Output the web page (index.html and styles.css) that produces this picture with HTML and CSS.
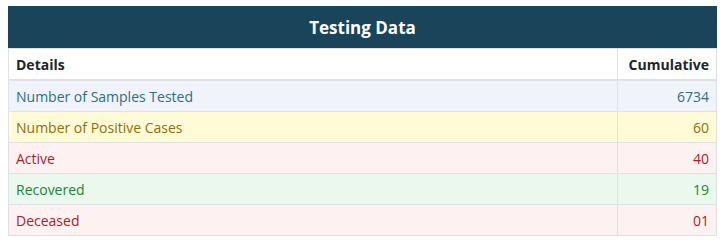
FILE: index.html
```html
<!DOCTYPE html>
<html lang="en">
<head>
    <meta charset="UTF-8">
    <meta name="viewport" content="width=device-width, initial-scale=1.0">
    <title>Testing Data</title>
    <link rel="stylesheet" href="styles.css">
</head>
<body>
    <div class="container">
        <div class="card-title">Testing Data</div>
        <table class="data-table">
            <thead>
                <tr><th>Details</th><th class="num">Cumulative</th></tr>
            </thead>
            <tbody>
                <tr class="row-tested"><td>Number of Samples Tested</td><td class="num">6734</td></tr>
                <tr class="row-positive"><td>Number of Positive Cases</td><td class="num">60</td></tr>
                <tr class="row-danger"><td>Active</td><td class="num">40</td></tr>
                <tr class="row-recovered"><td>Recovered</td><td class="num">19</td></tr>
                <tr class="row-danger"><td>Deceased</td><td class="num">01</td></tr>
            </tbody>
        </table>
    </div>
</body>
</html>
```

FILE: styles.css
```css
/* General styling */
body {
    font-family: "Open Sans", "Noto Sans", Arial, sans-serif;
    background-color: #fff;
    color: #212529;
    margin: 0;
    padding: 6px 11px 0 8px;
}
.container {
    width: 709px;
}
.card-title {
    background-color: #19445a;
    color: #fff;
    font-size: 17px;
    font-weight: 700;
    text-align: center;
    height: 42px;
    line-height: 44px;
}
.data-table {
    width: 100%;
    border-collapse: collapse;
    font-size: 14px;
    border: 1px solid #dee2e6;
}
th, td {
    padding: 0 7px 0 7px;
    height: 30px;
    text-align: left;
    border: 1px solid #dee2e6;
    border-top: none;
}
th {
    font-weight: 700;
    color: #212529;
    height: 30px;
    border-bottom: 2px solid #dee2e6;
}
.num {
    text-align: right;
    width: 84px;
}
.row-tested { background-color: #f1f3fc; color: #2b6f80; }
.row-positive { background-color: #fffbd6; color: #8f6e0e; }
.row-danger { background-color: #fdf1f1; color: #a81e28; }
.row-recovered { background-color: #ebf8ed; color: #1e8330; }
```
